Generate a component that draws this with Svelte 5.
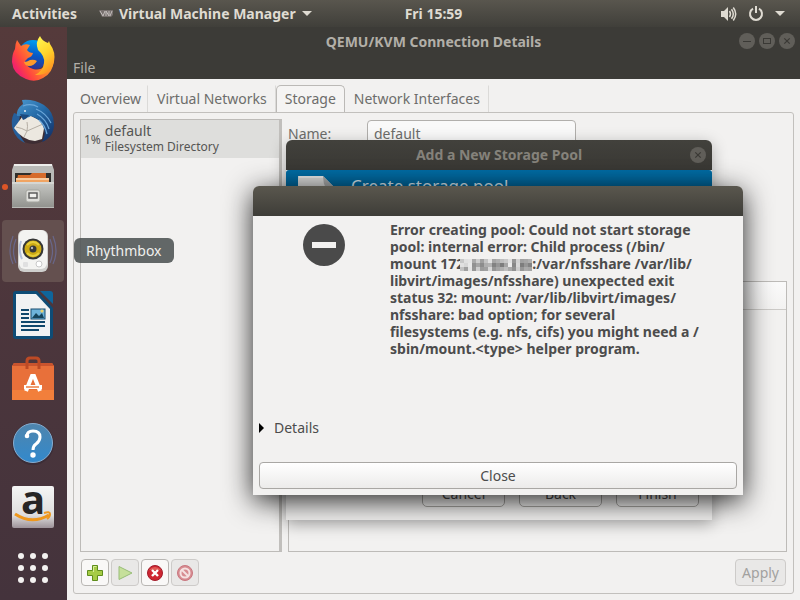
<svelte:options runes={true} />
<script lang="ts">
  const tabs = ["Overview", "Virtual Networks", "Storage", "Network Interfaces"];
  let activeTab = $state("Storage");
  let poolName = $state("default");
  let showError = $state(true);
  let showWizard = $state(true);

  const messageStart = ["Error creating pool: Could not start storage", "pool: internal error: Child process (/bin/"];
  const messageEnd = [
    "libvirt/images/nfsshare) unexpected exit",
    "status 32: mount: /var/lib/libvirt/images/",
    "nfsshare: bad option; for several",
    "filesystems (e.g. nfs, cifs) you might need a /",
    "sbin/mount.<type> helper program.",
  ];

  // grey levels of the masked address, one row per line of blocks
  const mask = [
    [200, 225, 228, 170, 205, 160, 195, 225, 165, 175, 190, 200, 225, 150, 210, 160, 165, 175],
    [225, 215, 232, 145, 165, 140, 175, 180, 130, 150, 125, 165, 235, 135, 215, 125, 150, 130],
    [195, 160, 228, 150, 205, 155, 160, 215, 150, 165, 175, 190, 170, 145, 205, 150, 170, 165],
  ];
</script>

{#snippet closeGlyph()}
  <svg width="16" height="16" viewBox="0 0 16 16">
    <circle cx="8" cy="8" r="8" fill="#605e59" />
    <path d="M5.3 5.3l5.4 5.4M10.7 5.3l-5.4 5.4" stroke="#3a3935" stroke-width="1.2" />
  </svg>
{/snippet}

<div class="desktop">
  <header class="topbar">
    <div class="topbar-left">
      <button class="activities">Activities</button>
      <button class="app-menu">
        <svg width="14" height="10" viewBox="0 0 14 10">
          <path d="M0 1h14v5l-2 2H3z" fill="#77706e" />
          <path d="M1 2l3 5 2-5M7 7V2l3 5V2M11 7l2-5" fill="none" stroke="#c4bebc" stroke-width="1" />
        </svg>
        <span>Virtual Machine Manager</span>
        <svg width="10" height="6" viewBox="0 0 10 6"><path d="M0 0h10L5 5z" fill="#dfdbd2" /></svg>
      </button>
    </div>
    <button class="clock">Fri 15:59</button>
    <button class="status" aria-label="System menu">
      <svg width="17" height="16" viewBox="0 0 17 16">
        <path d="M1 5h3l4-4v14l-4-4H1z" fill="#dfdbd2" />
        <path d="M9.5 5q2 3 0 6M11.5 3.2q3.6 4.8 0 9.6M13.3 1.5q4.8 6.5 0 13" fill="none" stroke="#dfdbd2" stroke-width="1.5" />
      </svg>
      <svg width="16" height="16" viewBox="0 0 16 16">
        <path d="M5 2.7a6 6 0 1 0 6 0M8 0v7" fill="none" stroke="#dfdbd2" stroke-width="2" />
      </svg>
      <svg width="10" height="6" viewBox="0 0 10 6"><path d="M0 0h10L5 5z" fill="#dfdbd2" /></svg>
    </button>
  </header>

  <div class="workspace">
    <nav class="dock" aria-label="Dock">
      <button class="launcher" aria-label="Firefox">
        <svg width="48" height="48" viewBox="0 0 48 48">
          <defs>
            <linearGradient id="ff-body" x1=".9" y1=".2" x2=".1" y2=".7">
              <stop offset="0" stop-color="#ffb52a" />
              <stop offset=".5" stop-color="#ff7a2e" />
              <stop offset=".8" stop-color="#ff4440" />
              <stop offset="1" stop-color="#f0246a" />
            </linearGradient>
            <linearGradient id="ff-globe" x1=".6" y1="0" x2=".4" y2="1">
              <stop offset="0" stop-color="#00a0f2" />
              <stop offset=".5" stop-color="#0759c6" />
              <stop offset="1" stop-color="#392f87" />
            </linearGradient>
            <linearGradient id="ff-flame" x1=".2" y1="0" x2=".6" y2="1">
              <stop offset="0" stop-color="#fff651" />
              <stop offset=".5" stop-color="#ffd42b" />
              <stop offset="1" stop-color="#ff8f20" />
            </linearGradient>
          </defs>
          <circle cx="24" cy="20" r="15" fill="url(#ff-globe)" />
          <path d="M6 14Q6 9 8 5l4 6q4-3 9-1l-3 5q2 3 6 3-1 4-5 5l-3 3q1 6 8 8 7 2 12-3 7-3 9-6-1 13-11 18-8 5-17 1Q4 39 3 27q0-8 3-13z" fill="url(#ff-body)" />
          <path d="M31 1q-5 6-2 14 7 6 6 13-1 8-9 12 15 1 19-13 2-10-4-18l-1-3-1 2q-6-2-8-7z" fill="url(#ff-flame)" />
          <path d="M15 27q3 0 6-2 4-1 7 1-3 5-8 5-4 0-5-4z" fill="#ff9a2b" />
        </svg>
      </button>
      <button class="launcher" aria-label="Thunderbird">
        <svg width="48" height="48" viewBox="0 0 48 48">
          <defs>
            <linearGradient id="tb-wing" x1="0" y1="0" x2=".7" y2="1">
              <stop offset="0" stop-color="#4a97cf" />
              <stop offset=".5" stop-color="#2469a6" />
              <stop offset="1" stop-color="#15376e" />
            </linearGradient>
          </defs>
          <circle cx="24" cy="26" r="19" fill="#2a222c" opacity=".5" />
          <path d="M5 14Q1 22 4 31q3 9 12 13-5-6-7-13l2-15z" fill="#265f9b" />
          <path d="M5 29l11-15 20 10-3 16-7 2q-13-1-21-13z" fill="#ece8e0" />
          <path d="M7 28q6 1 11 4l16-7M18 32l-3 6M18 32q1-5 0-9" fill="none" stroke="#b5aea4" stroke-width="1" />
          <path d="M8 17q-1-7 6-12l-1-4q12-1 22 5 10 7 10 19 0 13-12 18 5-8 1-16-3-7-12-10-5 3-8 0-3 0-6 0z" fill="url(#tb-wing)" />
          <path d="M27 10q10 4 15 14M28 15q9 5 12 15M30 21q6 5 8 14M14 7q8-3 15 1" fill="none" stroke="#6ca7da" stroke-width="1.2" />
          <path d="M11 15l3 6q4-1 6-5z" fill="#1b4a80" />
          <circle cx="16" cy="12" r="1" fill="#e8eef4" />
        </svg>
      </button>
      <button class="launcher running" aria-label="Files">
        <svg width="48" height="48" viewBox="0 0 48 48">
          <defs>
            <linearGradient id="files-metal" x1="0" y1="0" x2="0" y2="1">
              <stop offset="0" stop-color="#c8c9c5" />
              <stop offset="1" stop-color="#92938f" />
            </linearGradient>
          </defs>
          <path d="M5 1h38l2 6v38H3V7z" fill="#b9bab7" />
          <path d="M5 2h38" stroke="#ededeb" stroke-width="2" />
          <path d="M6 10h36v10H6z" fill="#302e2b" />
          <path d="M9 12h12l2-2h14v11H7z" fill="#d66b2a" />
          <path d="M7 15h33v6H7z" fill="#f0a462" />
          <path d="M7 16h33" stroke="#fff0da" stroke-width="1" />
          <path d="M3 19h42v25H3z" fill="url(#files-metal)" />
          <path d="M3 20h42" stroke="#e6e6e3" stroke-width="1" />
          <rect x="17" y="27" width="14" height="12" rx="2" fill="#dededa" stroke="#a3a49e" />
          <rect x="20" y="30" width="8" height="5" fill="#f0f0ed" stroke="#555" stroke-width="1.4" />
        </svg>
      </button>
      <button class="launcher hovered" aria-label="Rhythmbox">
        <svg width="48" height="48" viewBox="0 0 48 48">
          <path d="M7 12q-5 12 0 24M4 9q-6 15 0 28M41 12q5 12 0 24M44 9q6 15 0 28" fill="none" stroke="#69678a" stroke-width="1.2" />
          <rect x="9" y="3" width="30" height="42" rx="6" fill="#cfcfcd" />
          <rect x="10" y="3" width="28" height="39" rx="6" fill="#f3f3f1" />
          <path d="M12 14q-3 9 1 18" fill="none" stroke="#b4c0dc" stroke-width="2" />
          <circle cx="24" cy="22" r="10.5" fill="#353636" />
          <circle cx="24" cy="22" r="8.5" fill="#cda914" />
          <path d="M18 18q6-6 12 0M18 26q6 6 12 0" stroke="#e6cd3c" fill="none" stroke-width="2" />
          <circle cx="24" cy="22" r="3.5" fill="#363739" />
          <circle cx="23" cy="21" r="1.2" fill="#b9babc" />
          <circle cx="30" cy="37" r="3" fill="#fff" stroke="#c8c8c8" />
          <rect x="14" y="35" width="5" height="5" rx="1" fill="#e0e0e0" />
        </svg>
        <span class="tooltip">Rhythmbox</span>
      </button>
      <button class="launcher" aria-label="LibreOffice Writer">
        <svg width="48" height="48" viewBox="0 0 48 48">
          <path d="M7 0h21l16 17v28q0 3-3 3H7q-3 0-3-3V3q0-3 3-3z" fill="#0e4c76" />
          <path d="M7 3h20l14 15v27H7z" fill="#f1f2f3" />
          <path d="M31 0h10q3 0 3 3v10z" fill="#0f659b" />
          <path d="M12 19h8M12 23h8M12 27h8M12 31h24M12 35h24M12 39h18" stroke="#10476b" stroke-width="2" />
          <rect x="22" y="18" width="14" height="10" fill="#6eb3da" stroke="#184d70" />
          <path d="M23 27l4-5 3 3 3-3 2 5z" fill="#16445b" />
          <circle cx="33" cy="20" r="1.6" fill="#ebd06a" />
        </svg>
      </button>
      <button class="launcher" aria-label="Ubuntu Software">
        <svg width="48" height="48" viewBox="0 0 48 48">
          <path d="M5 8h38l2 3v34H3V11z" fill="#e8703a" />
          <path d="M3 35h42v10H3z" fill="#f27f3b" />
          <path d="M5 8h38l2 3H3z" fill="#c9542e" />
          <path d="M18 14V6q0-3 3-3h6q3 0 3 3v8" fill="none" stroke="#bd4a25" stroke-width="3" />
          <path d="M17 36l6-15h2l6 15" fill="none" stroke="#fff" stroke-width="4" />
          <path d="M15 32h18" stroke="#fff" stroke-width="4" />
          <path d="M17 32h13" stroke="#ea7436" stroke-width="1.4" />
        </svg>
      </button>
      <button class="launcher" aria-label="Help">
        <svg width="48" height="48" viewBox="0 0 48 48">
          <defs>
            <linearGradient id="help-blue" x1="0" y1="0" x2="0" y2="1">
              <stop offset="0" stop-color="#4f85ad" />
              <stop offset="1" stop-color="#3289cc" />
            </linearGradient>
          </defs>
          <circle cx="24" cy="25" r="21" fill="#2b2230" opacity=".4" />
          <circle cx="24" cy="24" r="19.500" fill="url(#help-blue)" stroke="#87add0" />
          <path d="M18 17q0-5 6-5 7 0 7 6 0 4-4 7-3 2-3 6" fill="none" stroke="#fff" stroke-width="3" />
          <circle cx="18" cy="17" r="2.300" fill="#fff" />
          <circle cx="24" cy="36" r="2.700" fill="#fff" />
        </svg>
      </button>
      <button class="launcher" aria-label="Amazon">
        <svg width="48" height="48" viewBox="0 0 48 48">
          <defs>
            <linearGradient id="amazon-tile" x1="0" y1="0" x2="0" y2="1">
              <stop offset="0" stop-color="#f5f5f5" />
              <stop offset=".7" stop-color="#dedddd" />
              <stop offset="1" stop-color="#9d9299" />
            </linearGradient>
          </defs>
          <rect x="3" y="3" width="42" height="42" rx="2" fill="url(#amazon-tile)" />
          <text class="amazon-letter" x="24" y="31" text-anchor="middle">a</text>
          <path d="M6 31q17 11 34 1" fill="none" stroke="#ee971d" stroke-width="3" />
          <path d="M35 30q6-2 6 1t-3 5" fill="none" stroke="#ee971d" stroke-width="2" />
        </svg>
      </button>
      <button class="launcher show-apps" aria-label="Show Applications">
        <svg width="48" height="48" viewBox="0 0 48 48">
          {#each [12, 24, 36] as cy}
            {#each [12, 24, 36] as cx}
              <circle {cx} {cy} r="3" fill="#f3f1f0" />
            {/each}
          {/each}
        </svg>
      </button>
    </nav>

    <main class="window">
      <header class="window-head">
        <div class="titlebar">
          <h1>QEMU/KVM Connection Details</h1>
          <div class="window-controls">
            <button aria-label="Minimize">
              <svg width="16" height="16" viewBox="0 0 16 16">
                <circle cx="8" cy="8" r="8" fill="#605e59" />
                <path d="M4 8.5h8" stroke="#3a3935" />
              </svg>
            </button>
            <button aria-label="Maximize">
              <svg width="16" height="16" viewBox="0 0 16 16">
                <circle cx="8" cy="8" r="8" fill="#605e59" />
                <rect x="4.5" y="5.5" width="7" height="5" fill="none" stroke="#3a3935" />
              </svg>
            </button>
            <button aria-label="Close window">{@render closeGlyph()}</button>
          </div>
        </div>
        <div class="menubar"><button>File</button></div>
      </header>

      <div class="notebook">
        <div class="tabs" role="tablist">
          {#each tabs as tab}
            <button role="tab" class:active={tab === activeTab} aria-selected={tab === activeTab} onclick={() => (activeTab = tab)}>
              {tab}
            </button>
          {/each}
        </div>
        <section class="page">
          <div class="panes">
            <div class="pool-list">
              <button class="pool">
                <span class="usage">1%</span>
                <span class="pool-text">
                  <span class="pool-name">default</span>
                  <span class="pool-kind">Filesystem Directory</span>
                </span>
              </button>
            </div>
            <div class="pool-detail">
              <div class="form">
                <label for="pool-name">Name:</label>
                <input id="pool-name" type="text" bind:value={poolName} />
              </div>
              <div class="volumes"><div class="volumes-head"></div></div>
            </div>
          </div>
          <footer class="actions">
            <button class="tool" aria-label="Add pool">
              <svg width="18" height="18" viewBox="0 0 18 18">
                <path d="M6.500 1.500h5v5h5v5h-5v5h-5v-5h-5v-5h5z" fill="#a5cb45" stroke="#5e8d1c" />
                <path d="M7.500 8V2.500h3" fill="none" stroke="#d9ec9e" />
              </svg>
            </button>
            <button class="tool" aria-label="Start pool" disabled>
              <svg width="18" height="18" viewBox="0 0 18 18">
                <path d="M3 2.500l13 6.500-13 6.500z" fill="#c6e09b" stroke="#98bd78" />
              </svg>
            </button>
            <button class="tool" aria-label="Stop pool">
              <svg width="18" height="18" viewBox="0 0 18 18">
                <circle cx="9" cy="9" r="7.500" fill="#ce2632" stroke="#a31d2b" />
                <path d="M3 6q6-6 12 0z" fill="#e25b56" />
                <path d="M6 6l6 6M12 6l-6 6" stroke="#fff" stroke-width="2.400" />
              </svg>
            </button>
            <button class="tool" aria-label="Delete pool" disabled>
              <svg width="18" height="18" viewBox="0 0 18 18">
                <circle cx="9" cy="9" r="7.500" fill="#d78d92" stroke="#c9767f" />
                <circle cx="9" cy="9" r="4.500" fill="none" stroke="#f5e2e2" stroke-width="2" />
                <path d="M6 6l6 6" stroke="#f5e2e2" stroke-width="2" />
              </svg>
            </button>
            <button class="apply" disabled>Apply</button>
          </footer>
        </section>
      </div>
    </main>
  </div>

  {#if showWizard}
    <section class="wizard" aria-label="Add a New Storage Pool">
      <header class="wizard-title">
        <h2>Add a New Storage Pool</h2>
        <button aria-label="Close wizard" onclick={() => (showWizard = false)}>{@render closeGlyph()}</button>
      </header>
      <div class="wizard-banner">
        <svg width="38" height="48" viewBox="0 0 38 48">
          <path d="M0 0h25l13 13v35H0z" fill="#d6d6d5" />
          <path d="M25 0l13 13H28q-3-6-3-13z" fill="#a5a6a6" />
          <path d="M1 1h24" stroke="#f4f4f4" />
        </svg>
        <span>Create storage pool</span>
      </div>
      <footer class="wizard-actions">
        <button>Cancel</button>
        <button>Back</button>
        <button>Finish</button>
      </footer>
    </section>
  {/if}

  {#if showError}
    <div class="error-dialog" role="alertdialog" aria-label="Error creating pool">
      <div class="error-title"></div>
      <div class="error-content">
        <svg class="error-icon" width="42" height="42" viewBox="0 0 42 42">
          <circle cx="21" cy="21" r="21" fill="#4a4a4a" />
          <rect x="9" y="18" width="24" height="6" fill="#f2f1f0" />
        </svg>
        <p>
          {#each messageStart as line}{line}<br />{/each}
          mount 172<svg class="mask" width="72" height="12" viewBox="0 0 72 12">
            {#each mask as row, y}
              {#each row as level, x}
                <rect x={x * 4} y={y * 4} width="4" height="4" fill={`rgb(${level}, ${level}, ${level})`} />
              {/each}
            {/each}
          </svg>:/var/nfsshare /var/lib/<br />
          {#each messageEnd as line}{line}<br />{/each}
        </p>
      </div>
      <details>
        <summary>
          <svg width="5" height="10" viewBox="0 0 5 10"><path d="M0 0l5 5-5 5z" fill="#000" /></svg>
          Details
        </summary>
      </details>
      <button class="close" onclick={() => (showError = false)}>Close</button>
    </div>
  {/if}
</div>

<style>
  :global(body) {
    background: #f2f1f0;
  }
  .desktop {
    position: relative;
    min-height: 100vh;
    display: flex;
    flex-direction: column;
    overflow: hidden;
    font-family: "Noto Sans", "Open Sans", sans-serif;
    font-size: 14px;
    line-height: 17px;
    color: #4c4c4c;
  }
  .desktop * {
    box-sizing: border-box;
  }
  svg {
    display: block;
    flex: none;
    overflow: visible;
  }
  button {
    font: inherit;
    color: inherit;
    border: 0;
    padding: 0;
    background: none;
    white-space: nowrap;
  }
  h1,
  h2,
  p {
    margin: 0;
    font-size: 14px;
  }

  .topbar {
    height: 27px;
    display: grid;
    grid-template-columns: 70px 1fr auto 1fr;
    align-items: center;
    padding: 0 15px 0 12px;
    background: linear-gradient(#59564e, #403f3a);
    color: #dfdbd2;
    font-weight: 700;
  }
  .topbar-left,
  .app-menu,
  .status {
    display: flex;
    align-items: center;
  }
  .topbar-left {
    grid-column: 1 / 3;
    gap: 22px;
  }
  .app-menu {
    gap: 6px;
  }
  .status {
    justify-self: end;
    gap: 11px;
  }

  .workspace {
    flex: 1;
    display: flex;
  }
  .dock {
    flex: none;
    width: 67px;
    padding: 1px 3px 0 2px;
    display: flex;
    flex-direction: column;
    gap: 2px;
    background: linear-gradient(#553a3b, #4c363c 50%, #44333c);
  }
  .launcher {
    position: relative;
    height: 62px;
    display: flex;
    align-items: center;
    justify-content: center;
    border-radius: 4px;
  }
  .launcher.hovered {
    background: #64504f;
  }
  .launcher.running::before {
    content: "";
    position: absolute;
    left: 0;
    top: 28px;
    width: 6px;
    height: 6px;
    border-radius: 50%;
    background: #dd5527;
  }
  .launcher.show-apps {
    height: 56px;
  }
  .amazon-letter {
    font-family: "Open Sans", sans-serif;
    font-size: 40px;
    font-weight: 700;
    fill: #272525;
  }
  .tooltip {
    position: absolute;
    z-index: 2;
    left: 72px;
    top: 18px;
    padding: 4px 12px;
    border-radius: 6px;
    background: rgba(82, 88, 88, 0.9);
    color: #f0f0ee;
  }

  .window {
    flex: 1;
    min-width: 0;
    display: flex;
    flex-direction: column;
    background: #f2f1f0;
    color: #6d6d6b;
  }
  .window-head {
    background: #3c3b37;
    color: #b2afa8;
  }
  .titlebar {
    height: 28px;
    padding: 0 5px;
    display: grid;
    grid-template-columns: 1fr auto 1fr;
    align-items: center;
  }
  .titlebar h1 {
    grid-column: 2;
  }
  .window-controls {
    justify-self: end;
    display: flex;
    gap: 4px;
  }
  .menubar {
    height: 24px;
    padding: 4px 6px;
  }
  .notebook {
    flex: 1;
    padding: 6px;
    display: flex;
    flex-direction: column;
  }
  .tabs {
    display: flex;
  }
  .tabs button {
    height: 27px;
    padding: 0 8px 2px;
    border: 1px solid transparent;
    border-right-color: #dbdad8;
    border-bottom: 0;
  }
  .tabs button:first-child {
    padding: 0 6px 2px;
  }
  .tabs button.active {
    border-color: #bbb9b6;
    border-radius: 5px 5px 0 0;
    background: #f5f4f3;
  }
  .page {
    flex: 1;
    display: flex;
    flex-direction: column;
    padding: 6px 6px 7px;
    border: 1px solid #c2c0bd;
    border-radius: 3px;
  }
  .panes {
    flex: 1;
    display: grid;
    grid-template-columns: 202px 1fr;
    gap: 6px;
  }
  .pool-list {
    border: 1px solid #bdbbb8;
    border-right: 3px solid #c1bfbc;
  }
  .pool {
    width: 100%;
    height: 38px;
    padding: 0 3px;
    display: flex;
    align-items: center;
    gap: 4px;
    text-align: left;
    background: #dededc;
    color: #555553;
  }
  .usage,
  .pool-kind {
    font-size: 12px;
  }
  .pool-text {
    display: flex;
    flex-direction: column;
    line-height: 16px;
  }
  .pool-detail {
    display: flex;
    flex-direction: column;
  }
  .form {
    height: 162px;
    padding-top: 1px;
    display: grid;
    grid-template-columns: 79px 209px;
    align-items: start;
  }
  .form label {
    padding-top: 5px;
  }
  .form input {
    height: 27px;
    padding: 0 6px;
    border: 1px solid #b1afac;
    border-radius: 4px;
    background: #f9f9f9;
    color: #6d6d6b;
    font: inherit;
  }
  .volumes {
    flex: 1;
    border: 1px solid #bdbbb8;
  }
  .volumes-head {
    height: 28px;
    border-bottom: 1px solid #cccac7;
    background: linear-gradient(#fafafa, #f3f2f1);
  }
  .actions {
    display: flex;
    gap: 2px;
    padding: 7px 1px 0;
  }
  .tool,
  .apply {
    height: 27px;
    border: 1px solid #b8b6b3;
    border-radius: 4px;
    background: #f9f8f7;
  }
  .tool {
    width: 28px;
    display: flex;
    align-items: center;
    justify-content: center;
  }
  .tool:disabled,
  .apply:disabled {
    border-color: #cdcbc9;
    background: #e9e8e7;
    color: #a2a19f;
  }
  .apply {
    margin-left: auto;
    padding: 0 6px;
  }

  .wizard {
    position: absolute;
    left: 286px;
    top: 140px;
    width: 426px;
    height: 380px;
    display: flex;
    flex-direction: column;
    border-radius: 6px 6px 0 0;
    background: #f2f1f0;
    box-shadow: 0 4px 16px rgba(0, 0, 0, 0.3);
  }
  .wizard-title {
    height: 30px;
    padding: 0 6px 1px;
    display: grid;
    grid-template-columns: 1fr auto 1fr;
    align-items: center;
    border-radius: 6px 6px 0 0;
    background: linear-gradient(#42413c, #393834);
    color: #85827b;
  }
  .wizard-title h2 {
    grid-column: 2;
  }
  .wizard-title button {
    justify-self: end;
  }
  .wizard-banner {
    height: 60px;
    padding: 6px 12px;
    display: flex;
    gap: 15px;
    overflow: hidden;
    border-radius: 3px 3px 0 0;
    background: linear-gradient(#006ca4, #00466e);
    color: #d2e0e8;
    font-size: 17px;
    line-height: 20px;
  }
  .wizard-actions {
    margin-top: auto;
    padding: 13px;
    display: flex;
    justify-content: flex-end;
    gap: 14px;
  }
  .wizard-actions button {
    width: 83px;
    height: 27px;
    border: 1px solid #a9a7a4;
    border-radius: 5px;
    background: #f5f4f3;
  }

  .error-dialog {
    position: absolute;
    left: 253px;
    top: 186px;
    width: 490px;
    height: 309px;
    display: flex;
    flex-direction: column;
    border-radius: 6px 6px 0 0;
    background: #f2f1f0;
    box-shadow: 0 6px 28px rgba(0, 0, 0, 0.85);
  }
  .error-title {
    height: 30px;
    border-radius: 6px 6px 0 0;
    background: linear-gradient(#5a574e, #3e3d38);
  }
  .error-content {
    flex: 1;
    padding: 5px 24px 0 50px;
    display: flex;
    gap: 45px;
    font-weight: 700;
  }
  .error-icon {
    margin-top: 3px;
  }
  .error-content p {
    white-space: nowrap;
  }
  .mask {
    display: inline-block;
    margin-left: -4px;
    vertical-align: -2px;
  }
  summary {
    display: flex;
    align-items: center;
    gap: 10px;
    padding: 0 6px;
    list-style: none;
  }
  .close {
    height: 27px;
    margin: 26px 6px 6px;
    border: 1px solid #a9a7a4;
    border-radius: 4px;
    background: linear-gradient(#fff, #ecebea);
  }
</style>
